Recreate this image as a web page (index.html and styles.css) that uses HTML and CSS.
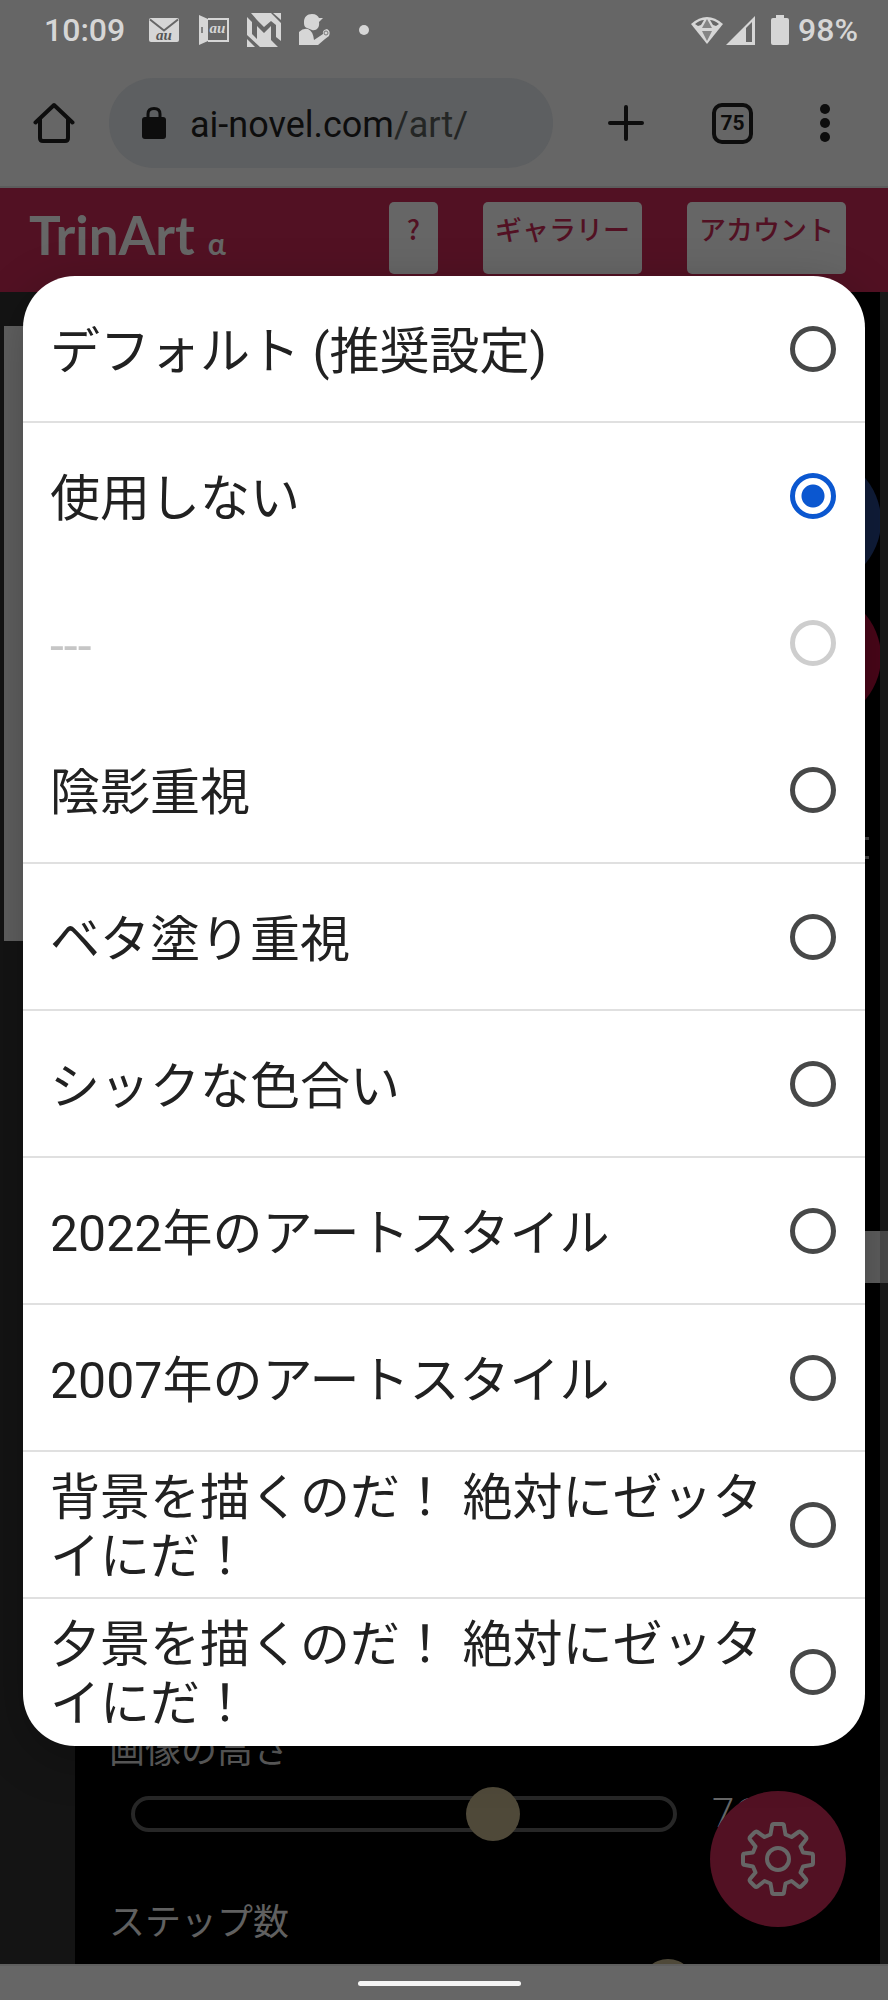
FILE: index.html
```html
<!DOCTYPE html>
<html lang="ja">
<head>
<meta charset="utf-8">
<meta name="viewport" content="width=device-width, initial-scale=1">
<title>TrinArt</title>
<link rel="stylesheet" href="styles.css">
</head>
<body>
<div class="status">
  <span class="clock">10:09</span>
  <svg class="i-mail" width="30" height="24" viewBox="0 0 30 24"><rect width="30" height="24" rx="2" fill="#d6d6d6"/><path d="M1 1.500L15 12.500L29 1.500" fill="none" stroke="#666" stroke-width="2"/><text x="15" y="21.500" text-anchor="middle" class="au">au</text></svg>
  <svg class="i-door" width="30" height="32" viewBox="0 0 30 32"><path d="M0 1L9 5V27L0 31Z" fill="#d6d6d6"/><path d="M9 5H29V27H9" fill="none" stroke="#d6d6d6" stroke-width="2"/><path d="M3 13V19" stroke="#666" stroke-width="1.500"/><text x="18.500" y="18.500" text-anchor="middle" class="au au-light">au</text></svg>
  <svg class="i-m" width="34" height="34" viewBox="0 0 34 34" fill="#d6d6d6"><path d="M4 0H24L34 10V28L29 24V12L24 8L17 14L10 7ZM26 0H34V7ZM0 4L5 9V21L10 26V13L17 20L24 13V27L31 34H13L0 22ZM0 26L8 34H0Z"/></svg>
  <svg class="i-person" width="32" height="32" viewBox="0 0 32 32" fill="#d6d6d6"><path d="M5 8C5 3 8 0 13 0C17 0 19 2 20 4L24 4L20 8C21 14 17 17 13 16L8 14C5 13 5 10 5 8ZM0 18Q4 14 9 15Q14 17 15 26L24 20Q23 16 28 15Q32 17 30 22L26 25L19 31H0Z"/><circle cx="27" cy="19" r="2" fill="none" stroke="#777"/></svg>
  <span class="dot"></span>
  <svg class="i-wifi" width="34" height="29" viewBox="0 0 34 29"><path d="M1 8Q17 -6 33 8L17 28Z" fill="#d6d6d6"/><path d="M5 8Q10 4 14 4L11 9L8 10ZM29 8Q24 4 20 4L23 9L26 10Z" fill="#666"/><path d="M17 3L22 12H12ZM12 15H22L17 25Z" fill="#858585"/></svg>
  <svg class="i-signal" width="29" height="29" viewBox="0 0 29 29"><path d="M0 29L29 0V29Z" fill="#d6d6d6"/><path d="M20 12L26 6V26H20Z" fill="#666"/></svg>
  <svg class="i-battery" width="18" height="30" viewBox="0 0 18 30"><path d="M5 0H13V3H16Q18 3 18 5V28Q18 30 16 30H2Q0 30 0 28V5Q0 3 2 3H5Z" fill="#d6d6d6"/></svg>
  <span class="percent">98%</span>
</div>

<div class="toolbar">
  <button class="tool" aria-label="ホーム"><svg width="42" height="42" viewBox="0 0 42 42" fill="none" stroke="#0d0d0d" stroke-width="4" stroke-linejoin="round" stroke-linecap="round"><path d="M2.500 20.500L21 3L39.500 20.500M7 17V36Q7 39 10 39H32Q35 39 35 36V17"/></svg></button>
  <button class="address"><svg width="24" height="32" viewBox="0 0 24 32"><rect y="10" width="24" height="22" rx="3" fill="#0d0d0d"/><path d="M6 11V7Q6 1.500 12 1.500Q18 1.500 18 7V11" fill="none" stroke="#0d0d0d" stroke-width="3"/></svg><span class="url">ai-novel.com<span class="path">/art/</span></span></button>
  <div class="tools">
    <button class="tool" aria-label="新しいタブ"><svg width="38" height="38" viewBox="0 0 38 38" stroke="#0d0d0d" stroke-width="4" stroke-linecap="round"><path d="M19 3V35M3 19H35"/></svg></button>
    <button class="tool tabs">75</button>
    <button class="tool" aria-label="メニュー"><svg width="10" height="38" viewBox="0 0 10 38" fill="#0d0d0d"><circle cx="5" cy="5" r="5"/><circle cx="5" cy="19" r="5"/><circle cx="5" cy="33" r="5"/></svg></button>
  </div>
</div>

<header class="header">
  <a class="logo" href="#">TrinArt <small>α</small></a>
  <nav class="links">
    <a href="#">?</a>
    <a href="#">ギャラリー</a>
    <a href="#">アカウント</a>
  </nav>
</header>

<main class="content">
  <div class="panel">
    <div class="field">
      <label for="height">画像の高さ</label>
      <div class="row"><input id="height" type="range" min="0" max="1000" value="683"><output>768</output></div>
    </div>
    <div class="field">
      <label for="steps">ステップ数</label>
      <div class="row"><input id="steps" type="range" min="0" max="50" value="50"><output class="short"></output></div>
    </div>
  </div>
  <div class="preview"></div>
  <div class="bubble blue"></div>
  <div class="bubble red"></div>
  <div class="peek"></div>
  <div class="box"></div>
  <div class="edge"></div>
  <button class="fab" aria-label="設定"><svg width="74" height="74" viewBox="0 0 74 74" fill="none" stroke="#666" stroke-width="4" stroke-linejoin="round"><path d="M31 4Q31 2 33 2H41Q43 2 43 4L44.500 12.500L50.500 15L57.500 10Q59 9 60.500 10.500L64.500 14.500Q66 16 65 17.500L59.500 24.500L62 30.500L70 31.500Q72 31.500 72 33.500V41Q72 43 70 43L62 44.500L59.500 50.500L65 57Q66 58.500 64.500 60L60.500 64Q59 65.500 57.500 64.500L50.500 59L44.500 61.500L43 70Q43 72 41 72H33Q31 72 31 70L29.500 61.500L23.500 59L16.500 64.500Q15 65.500 13.500 64L9.500 60Q8 58.500 9 57L14.500 50.500L12 44.500L4 43Q2 43 2 41V33.500Q2 31.500 4 31.500L12 30.500L14.500 24.500L9 17.500Q8 16 9.500 14.500L13.500 10.500Q15 9 16.500 10L23.500 15L29.500 12.500Z"/><circle cx="37" cy="37" r="11"/></svg></button>
</main>
<div class="gesture"><span></span></div>

<div class="overlay">
  <div class="dialog" role="radiogroup">
    <label class="option"><span>デフォルト (推奨設定)</span><input type="radio" name="style"></label>
    <label class="option plain"><span>使用しない</span><input type="radio" name="style" checked></label>
    <label class="option plain off"><span>---</span><input type="radio" name="style" disabled></label>
    <label class="option"><span>陰影重視</span><input type="radio" name="style"></label>
    <label class="option"><span>ベタ塗り重視</span><input type="radio" name="style"></label>
    <label class="option"><span>シックな色合い</span><input type="radio" name="style"></label>
    <label class="option"><span>2022年のアートスタイル</span><input type="radio" name="style"></label>
    <label class="option"><span>2007年のアートスタイル</span><input type="radio" name="style"></label>
    <label class="option"><span>背景を描くのだ！ 絶対にゼッタイにだ！</span><input type="radio" name="style"></label>
    <label class="option"><span>夕景を描くのだ！ 絶対にゼッタイにだ！</span><input type="radio" name="style"></label>
  </div>
</div>
</body>
</html>
```
FILE: styles.css
```css
* { box-sizing: border-box; }
body {
  margin: 0;
  height: 100vh;
  display: flex;
  flex-direction: column;
  position: relative;
  overflow: hidden;
  background: #141414;
  font-family: Roboto, "Noto Sans CJK JP", sans-serif;
}
button { border: 0; padding: 0; background: none; font: inherit; color: inherit; }
a { text-decoration: none; }
svg { display: block; flex: none; }

.status {
  height: 60px;
  flex: none;
  padding: 0 30px 0 44px;
  display: flex;
  align-items: center;
  background: #666;
  color: #d6d6d6;
  font-size: 32px;
  font-weight: 500;
}
.clock { margin-right: 24px; }
.i-mail { margin-right: 20px; }
.i-door { margin-right: 18px; }
.i-m { margin-right: 18px; }
.i-person { margin-right: 28px; }
.i-wifi { margin-left: auto; margin-right: 2px; }
.i-signal { margin-right: 16px; }
.i-battery { margin-right: 9px; }
.dot { width: 10px; height: 10px; border-radius: 50%; background: #d6d6d6; }
.au { font: italic bold 15px "Liberation Serif", serif; fill: #555; }
.au-light { fill: #d6d6d6; }

.toolbar {
  height: 128px;
  flex: none;
  padding: 0 58px 0 33px;
  display: flex;
  align-items: center;
  background: #666;
  border-bottom: 2px solid #5c5c5c;
}
.address {
  flex: 1;
  height: 90px;
  margin: 0 54px 0 34px;
  padding: 0 33px;
  display: flex;
  align-items: center;
  gap: 24px;
  border-radius: 45px;
  background: #5d5f61;
  color: #0d0d0d;
  font-size: 36px;
}
.url { padding-top: 4px; }
.path { color: #242625; }
.tools { display: flex; align-items: center; gap: 67px; }
.tabs {
  width: 41px;
  height: 41px;
  border: 4px solid #0d0d0d;
  border-radius: 10px;
  color: #0d0d0d;
  font-size: 21px;
  font-weight: 700;
  line-height: 32px;
}

.header {
  height: 104px;
  flex: none;
  padding: 14px 42px 0 29px;
  display: flex;
  justify-content: space-between;
  align-items: flex-start;
  background: #521123;
}
.logo { color: #666; font: 700 53px/66px Lato, sans-serif; }
.logo small { font-size: 30px; }
.links { display: flex; gap: 45px; }
.links a {
  min-width: 49px;
  height: 72px;
  padding: 7px 12px;
  border-radius: 5px;
  background: #666;
  color: #521123;
  font: 500 27px/40px "Noto Sans CJK JP", sans-serif;
  text-align: center;
}

.content { flex: 1; min-height: 0; position: relative; overflow: hidden; }
.panel {
  height: 100%;
  margin: 0 8px 0 75px;
  padding: 1432px 0 0 34px;
  background: #000;
  overflow: hidden;
}
.field { margin-bottom: 55px; }
.field label {
  display: block;
  margin-bottom: 9px;
  color: #606060;
  font-size: 36px;
  line-height: 54px;
}
.row { display: flex; align-items: center; gap: 35px; padding-left: 22px; height: 54px; }
.row output { width: 168px; color: #666; font-size: 40px; font-weight: 300; line-height: 54px; }
.row output.short { width: 146px; }
input[type="range"] {
  flex: 1;
  min-width: 0;
  height: 54px;
  margin: 0;
  appearance: none;
  -webkit-appearance: none;
  background: none;
}
input[type="range"]::-webkit-slider-runnable-track {
  height: 36px;
  box-sizing: border-box;
  border: 4px solid #272727;
  border-radius: 18px;
}
input[type="range"]::-webkit-slider-thumb {
  -webkit-appearance: none;
  width: 54px;
  height: 54px;
  margin-top: -13px;
  border-radius: 50%;
  background: #4f4939;
}
.preview { position: absolute; left: 4px; top: 34px; width: 300px; height: 615px; background: #606060; }
.bubble { position: absolute; right: 7px; width: 132px; height: 132px; border-radius: 50%; }
.blue { top: 163px; background: #101d3a; }
.red { top: 299px; background: #4a0619; }
.peek {
  position: absolute;
  right: 19px;
  top: 545px;
  width: 20px;
  height: 22px;
  border: solid #444;
  border-width: 3px 0;
}
.box { position: absolute; right: 0; top: 939px; width: 300px; height: 52px; background: #5e5e5e; }
.edge { position: absolute; right: 0; top: 0; bottom: 0; width: 8px; padding-top: 939px; background: #1a1a1a; }
.edge::before { content: ""; display: block; height: 52px; background: #4a4a4a; }
.fab {
  position: absolute;
  right: 42px;
  bottom: 37px;
  width: 136px;
  height: 136px;
  display: flex;
  align-items: center;
  justify-content: center;
  border-radius: 50%;
  background: #521123;
}
.gesture {
  height: 36px;
  flex: none;
  padding-right: 10px;
  display: flex;
  align-items: center;
  justify-content: center;
  background: #666;
  border-top: 2px solid #5e5e5e;
}
.gesture span { width: 163px; height: 5px; border-radius: 3px; background: #f5f5f5; }

.overlay { position: absolute; inset: 0; padding: 276px 23px 0; }
.dialog {
  border-radius: 52px;
  background: #fff;
  color: #212121;
  box-shadow: 0 12px 48px rgba(0, 0, 0, 0.25);
  overflow: hidden;
}
.option {
  min-height: 147px;
  padding: 0 29px 0 27px;
  display: flex;
  align-items: center;
  justify-content: space-between;
  gap: 20px;
  border-bottom: 2px solid #e0e0e0;
  font-size: 50px;
  line-height: 59px;
}
.option span { padding-top: 7px; }
.option.plain, .option:last-child { border-bottom-color: transparent; }
.off { color: #c6c6c6; }
.option input {
  appearance: none;
  -webkit-appearance: none;
  flex: none;
  width: 46px;
  height: 46px;
  margin: 0;
  border: 5px solid #474848;
  border-radius: 50%;
}
.option input:checked {
  border-color: #0b57d0;
  background: radial-gradient(circle, #0b57d0 11px, transparent 12px);
}
.option input:disabled { border-color: #cecece; }
```
